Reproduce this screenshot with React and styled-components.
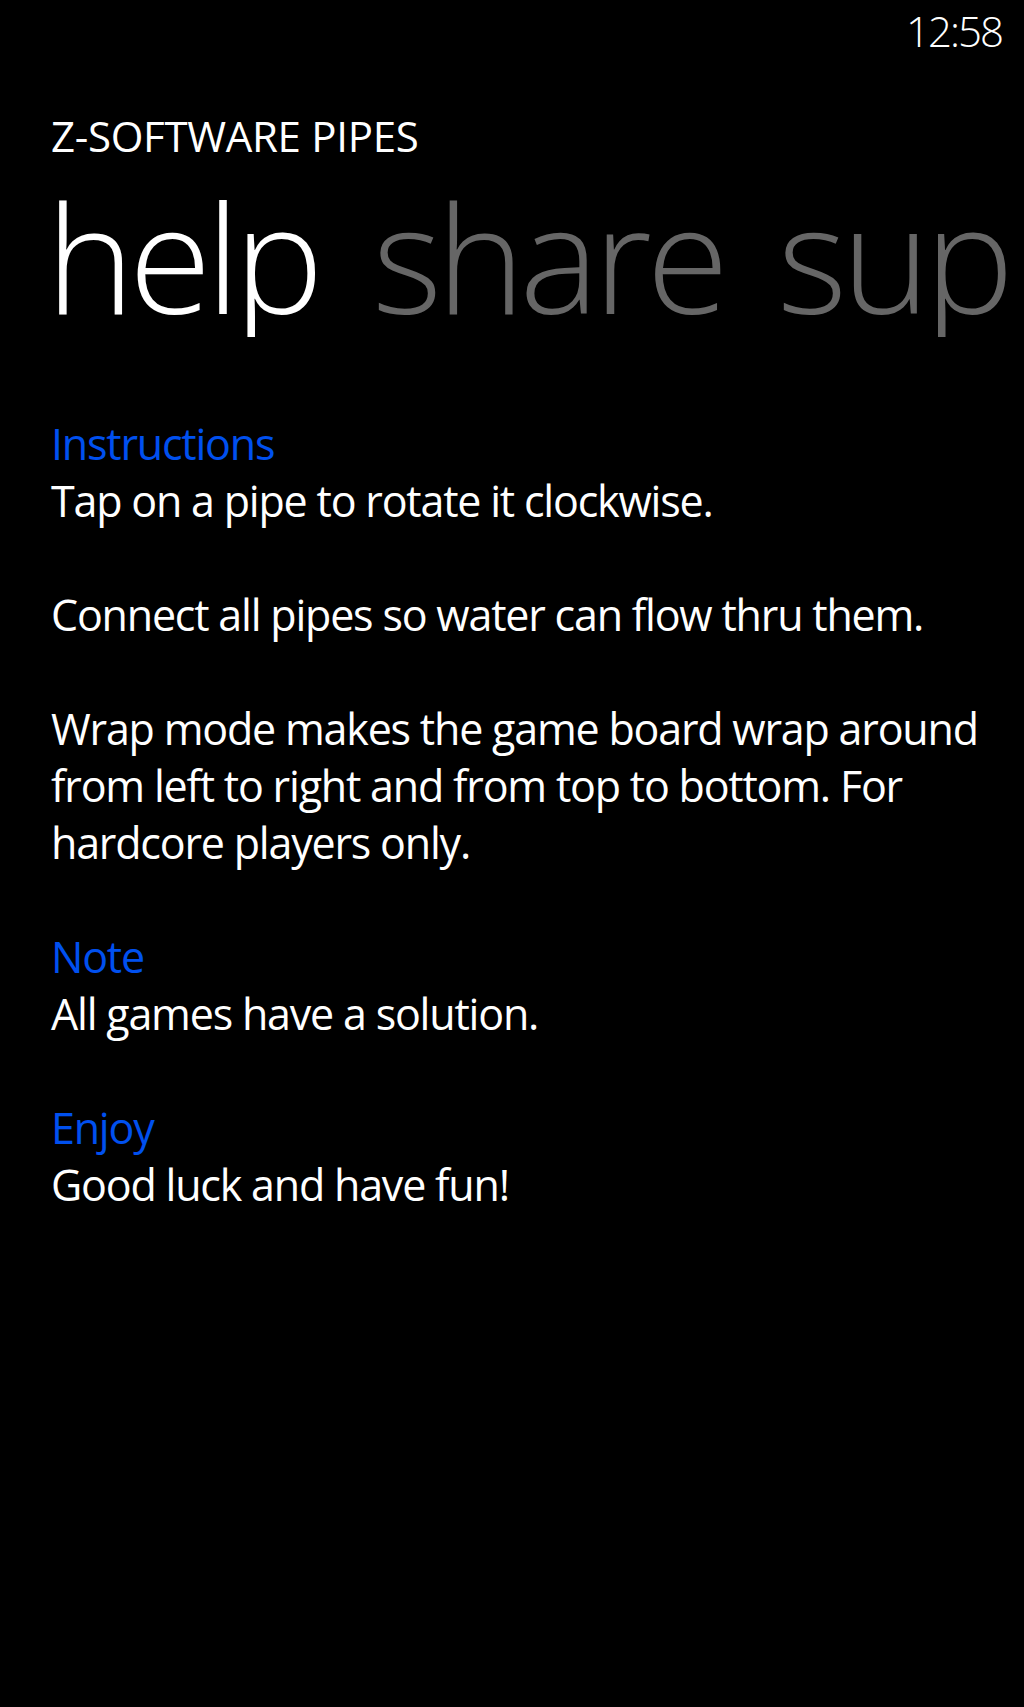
import React from "react";
import styled, { createGlobalStyle } from "styled-components";

const GlobalStyle = createGlobalStyle`
  html, body {
    margin: 0;
    padding: 0;
    background: #000000;
  }
  body {
    font-family: "Open Sans", "Noto Sans", sans-serif;
    color: #ffffff;
  }
`;

// Styled components
const Screen = styled.div`
  width: 1024px;
  min-height: 1707px;
  background: #000000;
  overflow: hidden;
`;

const StatusBar = styled.div`
  height: 68px;
  display: flex;
  justify-content: flex-end;
  padding-right: 22px;
`;

const Clock = styled.span`
  font-size: 42px;
  font-weight: 300;
  line-height: 62px;
  letter-spacing: -2px;
`;

const AppTitle = styled.h1`
  margin: 44px 0 0 51px;
  font-size: 42px;
  font-weight: 400;
  line-height: 48px;
  letter-spacing: -0.3px;
`;

const PivotHeaders = styled.div`
  display: flex;
  gap: 54px;
  margin: 15px 14px 0 46px;
  overflow: hidden;
  white-space: nowrap;
`;

const PivotItem = styled.span`
  font-size: 150px;
  font-weight: 300;
  line-height: 162px;
  letter-spacing: -5.5px;
  color: ${(props) => (props.active ? "#ffffff" : "#666666")};
`;

const Content = styled.div`
  width: 960px;
  margin: 78px 0 0 51px;
  font-size: 43px;
  line-height: 57px;
  letter-spacing: -1.2px;
`;

const Section = styled.section`
  & + & {
    margin-top: 57px;
  }
`;

const Heading = styled.div`
  color: #0050ef;
`;

const Paragraph = styled.p`
  margin: 0;
  & + & {
    margin-top: 57px;
  }
`;

const sections = [
  {
    title: "Instructions",
    body: [
      "Tap on a pipe to rotate it clockwise.",
      "Connect all pipes so water can flow thru them.",
      "Wrap mode makes the game board wrap around from left to right and from top to bottom. For hardcore players only.",
    ],
  },
  { title: "Note", body: ["All games have a solution."] },
  { title: "Enjoy", body: ["Good luck and have fun!"] },
];

const App = () => {
  return (
    <Screen>
      <GlobalStyle />
      <StatusBar>
        <Clock>12:58</Clock>
      </StatusBar>
      <AppTitle>Z-SOFTWARE PIPES</AppTitle>
      <PivotHeaders>
        <PivotItem active>help</PivotItem>
        <PivotItem>share</PivotItem>
        <PivotItem>support</PivotItem>
      </PivotHeaders>
      <Content>
        {sections.map((s) => (
          <Section key={s.title}>
            <Heading>{s.title}</Heading>
            {s.body.map((p) => (
              <Paragraph key={p}>{p}</Paragraph>
            ))}
          </Section>
        ))}
      </Content>
    </Screen>
  );
};

export default App;
